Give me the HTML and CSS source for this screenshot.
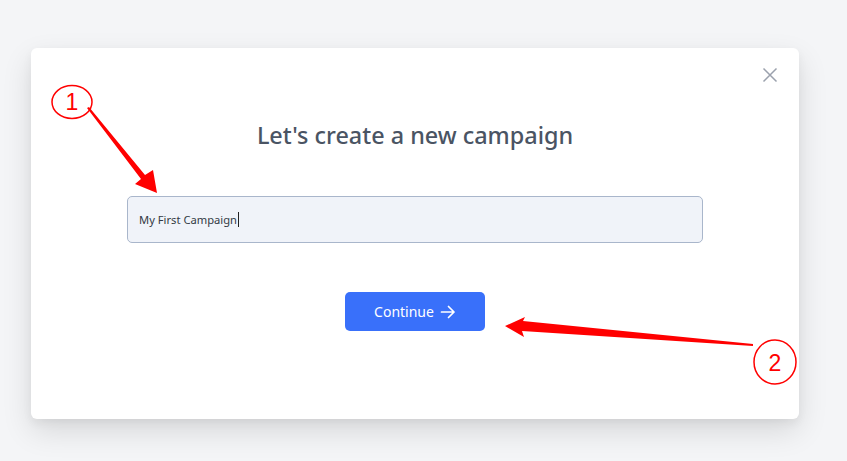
FILE: index.html
```html
<!DOCTYPE html>
<html>
<head>
<meta charset="utf-8">
<link rel="stylesheet" href="styles.css">
</head>
<body>
<div class="page">
  <div class="modal">
    <button class="close" aria-label="Close">
      <svg width="16" height="16" viewBox="0 0 16 16"><path d="M1.5 1.5 L14.5 14.5 M14.5 1.5 L1.5 14.5" stroke="#9ba1ad" stroke-width="1.5" fill="none"/></svg>
    </button>
    <h1 class="title">Let's create a new campaign</h1>
    <div class="field"><span class="value">My First Campaign</span><span class="caret"></span></div>
    <div class="actions">
      <button class="continue">Continue
        <svg width="16" height="14" viewBox="0 0 16 14"><path d="M1.5 7 H14 M8.5 1.5 L14 7 L8.5 12.5" stroke="#fff" stroke-width="1.7" fill="none" stroke-linecap="round" stroke-linejoin="round"/></svg>
      </button>
    </div>
  </div>
  <svg class="annot" width="847" height="461" viewBox="0 0 847 461">
    <ellipse cx="72" cy="102" rx="20" ry="16.5" fill="none" stroke="#ff0000" stroke-width="1.5"/>
    <text x="72" y="110" class="num">1</text>
    <polygon points="87,108 89,107 145,175 153,170 157,193 135,184 141,179" fill="#ff0000"/>
    <ellipse cx="775" cy="362" rx="21" ry="22" fill="none" stroke="#ff0000" stroke-width="1.5"/>
    <text x="775" y="371" class="num">2</text>
    <polygon points="753,346 753,344 523,321 525,317 505,326 524,337 522,331" fill="#ff0000"/>
  </svg>
</div>
</body>
</html>
```
FILE: styles.css
```css
html, body {
  margin: 0;
  padding: 0;
}
body {
  background: #f4f5f7;
  font-family: "Noto Sans", "Open Sans", sans-serif;
  width: 847px;
  height: 461px;
  overflow: hidden;
}
.page {
  position: relative;
  width: 847px;
  height: 461px;
  padding: 48px 0 0 31px;
  box-sizing: border-box;
}
.modal {
  position: relative;
  width: 768px;
  height: 371px;
  background: #ffffff;
  border-radius: 6px;
  box-shadow: 0 12px 30px rgba(0, 0, 0, 0.12), 0 4px 10px rgba(0, 0, 0, 0.05);
  box-sizing: border-box;
  padding-top: 71px;
  display: flex;
  flex-direction: column;
  align-items: center;
}
.close {
  position: absolute;
  top: 19px;
  right: 21px;
  width: 16px;
  height: 16px;
  padding: 0;
  border: 0;
  background: none;
  display: flex;
}
.title {
  margin: 0;
  font-size: 23.4px;
  line-height: 32px;
  font-weight: 500;
  color: #4a5463;
}
.field {
  margin-top: 45px;
  width: 576px;
  height: 47px;
  box-sizing: border-box;
  background: #f0f3f9;
  border: 1px solid #a9b6cb;
  border-radius: 5px;
  display: flex;
  align-items: center;
  padding-left: 11px;
  font-size: 11.2px;
  color: #333a44;
}
.caret {
  display: inline-block;
  width: 1px;
  height: 15px;
  background: #222;
  margin-left: 1px;
}
.actions {
  margin-top: 49px;
  display: flex;
}
.continue {
  width: 140px;
  height: 39px;
  border: 0;
  border-radius: 5px;
  background: #3970fa;
  color: #fff;
  font-family: "Noto Sans", "Open Sans", sans-serif;
  font-size: 14px;
  display: flex;
  align-items: center;
  justify-content: center;
  gap: 6px;
  padding: 0;
}
.annot {
  position: absolute;
  left: 0;
  top: 0;
}
.num {
  font-family: "Liberation Sans", sans-serif;
  font-size: 23px;
  fill: #ff0000;
  text-anchor: middle;
}
```
